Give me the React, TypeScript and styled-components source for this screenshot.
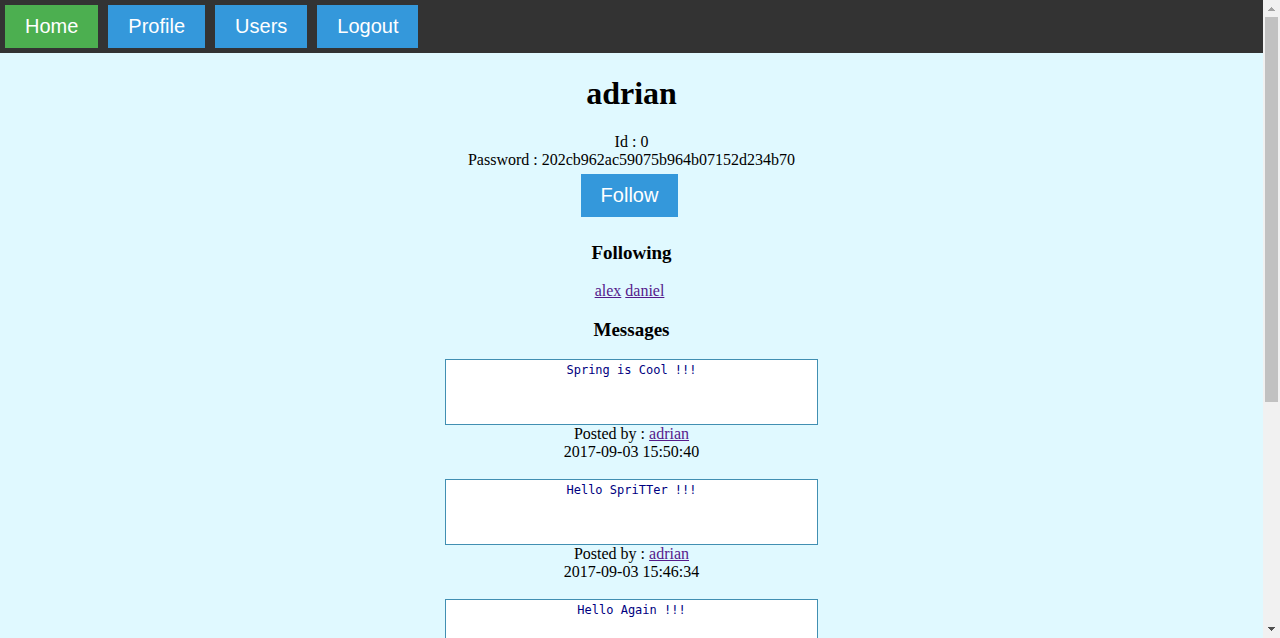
import React from "react";
import styled, { createGlobalStyle } from "styled-components";

const GlobalStyle = createGlobalStyle`
  * { box-sizing: border-box; }
  body {
    margin: 0;
    background: #e0f9ff;
    color: #000;
    font: 16px/18px "Liberation Serif", "Times New Roman", serif;
  }
`;

const Shell = styled.div`
  display: grid;
  grid-template-columns: minmax(0, 1fr) 17px;
  height: 100vh;
`;

const Page = styled.div`
  overflow-y: auto;
  scrollbar-width: none;
`;

const Button = styled.button<{ $active?: boolean }>`
  padding: 10px 20px;
  border: 0;
  background: ${(p) => (p.$active ? "#4caf50" : "#3498db")};
  color: #fff;
  font: 20px/23px "Liberation Sans", Arial, sans-serif;
  cursor: pointer;
`;

const Nav = styled.nav`
  display: flex;
  gap: 10px;
  padding: 5px;
  background: #333;
`;

const Main = styled.main`
  text-align: center;
`;

const Name = styled.h1`
  margin: 22px 0 21px;
  font-size: 32px;
  line-height: 37px;
`;

const Heading = styled.h3`
  margin: 19px 0;
  font-size: 19px;
  line-height: 21px;
`;

const Row = styled.div`
  display: flex;
  justify-content: center;
  gap: 4px;
  padding-right: 4px;
`;

const Actions = styled(Row)`
  padding-top: 5px;
  padding-bottom: 6px;
`;

const UserLink = styled.a`
  color: #551a8b;
`;

const Feed = styled.section`
  display: flex;
  flex-direction: column;
  align-items: center;
  gap: 18px;
  padding-bottom: 18px;
`;

const Post = styled.article`
  width: 373px;
  max-width: 100%;
`;

const MessageBox = styled.textarea`
  display: block;
  width: 100%;
  height: 66px;
  padding: 2px;
  border: 1px solid #418fb2;
  border-radius: 0;
  background: #fff;
  color: #000080;
  font: 12px/16px "DejaVu Sans Mono", monospace;
  text-align: center;
  resize: none;
`;

const Scrollbar = styled.div`
  display: flex;
  flex-direction: column;
  align-items: center;
  background: #f1f1f1;
`;

const Arrow = styled.svg`
  display: block;
  width: 17px;
  height: 17px;
`;

const Track = styled.div`
  flex: 1;
  width: 13px;
`;

const Thumb = styled.div`
  height: 63.8%;
  background: #c1c1c1;
`;

type Message = { text: string; author?: string; date?: string };

const pages = ["Home", "Profile", "Users", "Logout"];
const following = ["alex", "daniel"];
const messages: Message[] = [
  { text: "Spring is Cool !!!", author: "adrian", date: "2017-09-03 15:50:40" },
  { text: "Hello SpriTTer !!!", author: "adrian", date: "2017-09-03 15:46:34" },
  { text: "Hello Again !!!" },
];

export default function App() {
  return (
    <Shell>
      <GlobalStyle />
      <Page>
        <Nav>
          {pages.map((page) => (
            <Button key={page} type="button" $active={page === "Home"}>
              {page}
            </Button>
          ))}
        </Nav>
        <Main>
          <Name>adrian</Name>
          <div>Id : 0</div>
          <div>Password : 202cb962ac59075b964b07152d234b70</div>
          <Actions>
            <Button type="button">Follow</Button>
          </Actions>
          <Heading>Following</Heading>
          <Row>
            {following.map((user) => (
              <UserLink key={user} href={`#${user}`}>
                {user}
              </UserLink>
            ))}
          </Row>
          <Heading>Messages</Heading>
          <Feed>
            {messages.map((message) => (
              <Post key={message.text}>
                <MessageBox readOnly aria-label="Message" value={message.text} />
                {message.author && (
                  <div>
                    Posted by : <UserLink href={`#${message.author}`}>{message.author}</UserLink>
                  </div>
                )}
                {message.date && <time>{message.date}</time>}
              </Post>
            ))}
          </Feed>
        </Main>
      </Page>
      <Scrollbar aria-hidden="true">
        <Arrow viewBox="0 0 17 17" shapeRendering="crispEdges">
          <path d="M8 7h1v1h1v1h1v1h1v1H5v-1h1V9h1V8h1z" fill="#a3a3a3" />
        </Arrow>
        <Track>
          <Thumb />
        </Track>
        <Arrow viewBox="0 0 17 17" shapeRendering="crispEdges">
          <path d="M5 6h7v1h-1v1h-1v1H9v1H8V9H7V8H6V7H5z" fill="#505050" />
        </Arrow>
      </Scrollbar>
    </Shell>
  );
}
